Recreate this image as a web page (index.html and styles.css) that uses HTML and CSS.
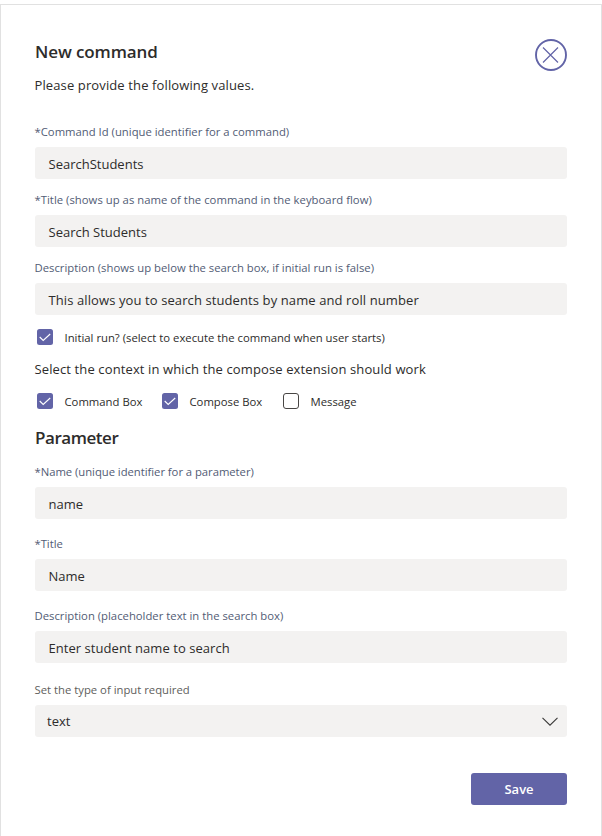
FILE: index.html
```
<!DOCTYPE html>
<html lang="en">
<head>
<meta charset="utf-8">
<title>New command</title>
<link rel="stylesheet" href="styles.css">
</head>
<body>
<main class="dialog">
  <header class="header">
    <div>
      <h1 class="heading">New command</h1>
      <p class="intro">Please provide the following values.</p>
    </div>
    <svg class="close" viewBox="0 0 34 34" role="img" aria-label="Close"><circle cx="17" cy="17" r="15" stroke-width="1.9"/><path d="M9 9.5l15 15M24 9.5l-15 15" stroke-width="1.2"/></svg>
  </header>
  <section class="command">
    <div class="field"><span class="label">*Command Id (unique identifier for a command)</span><div class="input">SearchStudents</div></div>
    <div class="field"><span class="label label-title">*Title (shows up as name of the command in the keyboard flow)</span><div class="input">Search Students</div></div>
    <div class="field"><span class="label">Description (shows up below the search box, if initial run is false)</span><div class="input input-long">This allows you to search students by name and roll number</div></div>
  </section>
  <div class="checks">
    <div class="check"><svg class="box on" viewBox="0 0 16 16"><rect width="16" height="16" rx="2.5"/><path d="M2.7 8l3.5 3.5L13.2 5"/></svg><span>Initial run? (select to execute the command when user starts)</span></div>
  </div>
  <p class="context">Select the context in which the compose extension should work</p>
  <div class="checks">
    <div class="check check-command"><svg class="box on" viewBox="0 0 16 16"><rect width="16" height="16" rx="2.5"/><path d="M2.7 8l3.5 3.5L13.2 5"/></svg><span>Command Box</span></div>
    <div class="check check-compose"><svg class="box on" viewBox="0 0 16 16"><rect width="16" height="16" rx="2.5"/><path d="M2.7 8l3.5 3.5L13.2 5"/></svg><span>Compose Box</span></div>
    <div class="check"><svg class="box" viewBox="0 0 16 16"><rect x=".5" y=".5" width="15" height="15" rx="2.5"/></svg><span>Message</span></div>
  </div>
  <h2 class="heading heading-param">Parameter</h2>
  <section class="parameter">
    <div class="field"><span class="label label-name">*Name (unique identifier for a parameter)</span><div class="input">name</div></div>
    <div class="field"><span class="label label-name">*Title</span><div class="input">Name</div></div>
    <div class="field"><span class="label">Description (placeholder text in the search box)</span><div class="input input-enter">Enter student name to search</div></div>
    <div class="field field-type"><span class="label label-type">Set the type of input required</span><div class="input select"><span>text</span><svg class="chevron" viewBox="0 0 16 9"><path d="M.5.8L8 8.2 15.5.8"/></svg></div></div>
  </section>
  <footer class="footer"><button class="save" type="button">Save</button></footer>
</main>
</body>
</html>
```
FILE: styles.css
```
* { box-sizing: border-box; }
body {
  margin: 0;
  padding-top: 4px;
  height: 836px;
  overflow: hidden;
  background: #fff;
  color: #2d2c2b;
  font: 13px/20px "Open Sans", "Noto Sans", sans-serif;
}
.dialog {
  height: 840px;
  padding: 34px 34px 0;
  border: 1px solid #e1e1e1;
}
.header { display: flex; justify-content: space-between; height: 82px; }
.heading { margin: 0; font-size: 17px; font-weight: 600; line-height: 26px; letter-spacing: -.1px; }
.intro { margin: 10px 0 0 -.5px; letter-spacing: .12px; }
.close { width: 34px; height: 34px; margin: -1px -1px 0 0; fill: none; stroke: #6264a7; }
.label {
  display: block;
  height: 26px;
  margin-left: -.5px;
  color: #525c75;
  font-size: 11.3px;
  line-height: 22px;
  white-space: nowrap;
}
.label-title { letter-spacing: .02px; }
.label-name { letter-spacing: -.04px; }
.field { margin-bottom: 10px; }
.input {
  height: 32px;
  padding: 0 13.5px;
  border-radius: 3px;
  background: #f3f2f1;
  line-height: 34px;
  white-space: nowrap;
}
.input-long { letter-spacing: .1px; }
.input-enter { letter-spacing: .05px; }
.command { height: 208px; }
.checks { display: flex; height: 16px; padding-left: 2px; font-size: 11.3px; line-height: 18px; white-space: nowrap; }
.check { display: flex; gap: 11.5px; }
.check-command { width: 125px; }
.check-compose { width: 121px; }
.box { width: 16px; height: 16px; fill: none; stroke: #484644; flex: none; }
.box.on { fill: #6264a7; stroke: none; }
.box.on path { fill: none; stroke: #fff; stroke-width: 1.1; }
.context { margin: 14px 0 14px -.5px; letter-spacing: .12px; white-space: nowrap; }
.heading-param { margin: 16px 0 10px; letter-spacing: -.45px; }
.parameter .field { margin-bottom: 14px; }
.parameter .field-type { margin: 16px 0 0; }
.label-type { color: #605e5c; }
.select { display: flex; justify-content: space-between; align-items: center; padding: 0 9px 0 12px; }
.chevron { width: 16px; height: 9px; fill: none; stroke: #3b3a39; stroke-width: 1.1; }
.footer { display: flex; justify-content: flex-end; margin-top: 36px; }
.save {
  width: 96px;
  height: 32px;
  padding: 0;
  border: 0;
  border-radius: 3px;
  background: #6264a7;
  color: #fff;
  font: 600 13px/32px "Open Sans", sans-serif;
}
```
